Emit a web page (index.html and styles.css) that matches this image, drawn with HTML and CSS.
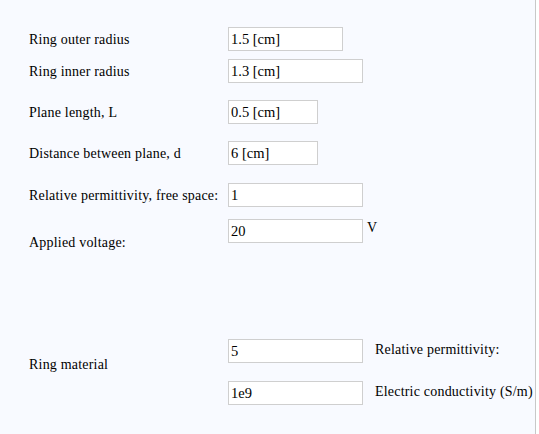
FILE: index.html
```html
<!DOCTYPE html>
<html>
<head>
<meta charset="utf-8">
<link rel="stylesheet" href="styles.css">
</head>
<body>
<div class="panel">
  <div class="row r1">
    <span class="label">Ring outer radius</span>
    <input class="field w115" type="text" value="1.5 [cm]">
  </div>
  <div class="row r2">
    <span class="label">Ring inner radius</span>
    <input class="field w135" type="text" value="1.3 [cm]">
  </div>
  <div class="row r3">
    <span class="label">Plane length, L</span>
    <input class="field w90" type="text" value="0.5 [cm]">
  </div>
  <div class="row r4">
    <span class="label">Distance between plane, d</span>
    <input class="field w90" type="text" value="6 [cm]">
  </div>
  <div class="row r5">
    <span class="label">Relative permittivity, free space:</span>
    <input class="field w135" type="text" value="1">
  </div>
  <div class="row volt">
    <span class="label">Applied voltage:</span>
    <div class="cell">
      <input class="field w135" type="text" value="20">
      <span class="unit">V</span>
    </div>
  </div>
  <div class="row material">
    <span class="label">Ring material</span>
    <div class="stack">
      <div class="pair">
        <input class="field w135" type="text" value="5">
        <span class="desc">Relative permittivity:</span>
      </div>
      <div class="pair">
        <input class="field w135" type="text" value="1e9">
        <span class="desc">Electric conductivity (S/m)</span>
      </div>
    </div>
  </div>
</div>
</body>
</html>
```
FILE: styles.css
```css
html, body {
  margin: 0;
  padding: 0;
  background: #ffffff;
}
.panel {
  width: 536px;
  height: 434px;
  box-sizing: border-box;
  background: #f8faff;
  border-right: 1px solid #c8c8c8;
  padding: 27px 0 0 29px;
  font-family: "Liberation Serif", "Times New Roman", serif;
  font-size: 14px;
  letter-spacing: 0.2px;
  color: #000;
}
.row {
  display: flex;
  align-items: baseline;
}
.label {
  width: 199px;
  flex: none;
  white-space: nowrap;
}
.field {
  box-sizing: border-box;
  height: 24px;
  margin: 0;
  padding: 0 2px;
  border: 1px solid #cfcfcf;
  background: #fff;
  font-family: "Liberation Serif", "Times New Roman", serif;
  font-size: 14.5px;
  color: #000;
  outline: none;
}
.w115 { width: 115px; }
.w135 { width: 135px; }
.w90 { width: 90px; }
.r2 { margin-top: 8px; }
.r3 { margin-top: 17px; }
.r4 { margin-top: 17px; }
.r5 { margin-top: 18px; }
.volt {
  margin-top: 12px;
  align-items: flex-start;
}
.volt .label {
  padding-top: 16px;
}
.cell {
  display: flex;
  align-items: flex-start;
}
.unit {
  margin-left: 4px;
  margin-top: 1px;
}
.material {
  margin-top: 88px;
  align-items: center;
}
.material .label {
  margin-top: -14px;
}
.stack {
  display: flex;
  flex-direction: column;
  gap: 18px;
}
.pair {
  display: flex;
  align-items: center;
}
.desc {
  margin-left: 12px;
  white-space: nowrap;
  margin-top: -3px;
}
```
